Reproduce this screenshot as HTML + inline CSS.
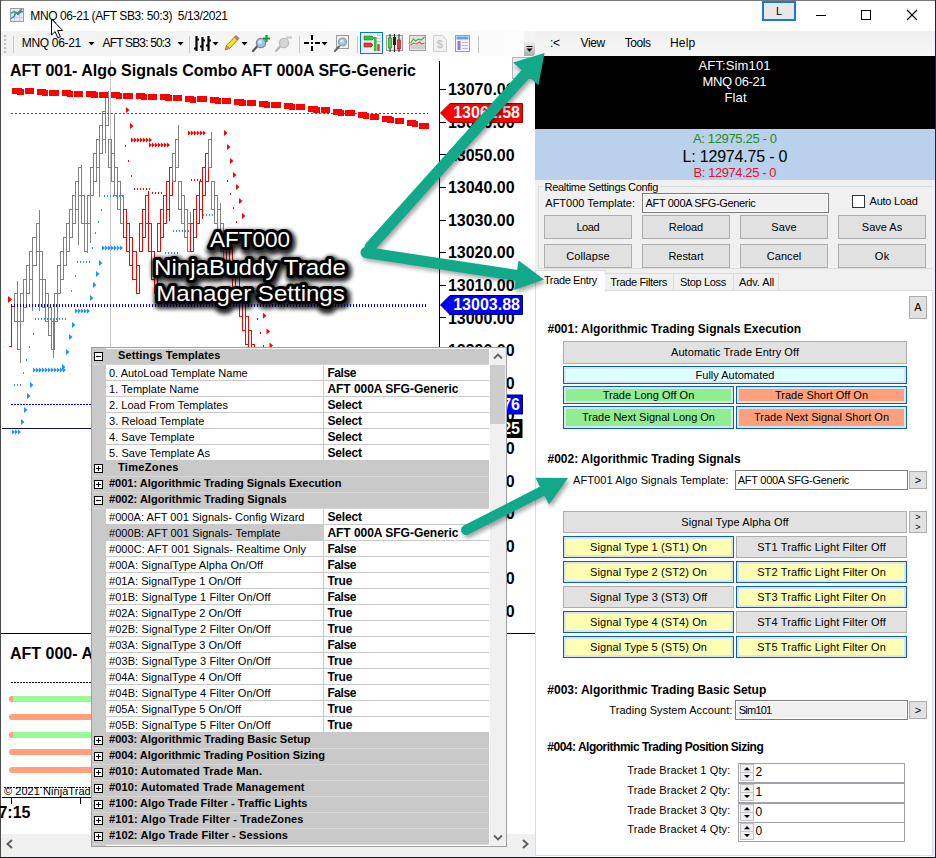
<!DOCTYPE html>
<html><head><meta charset="utf-8"><title>MNQ 06-21</title><style>
html,body{margin:0;padding:0;}
body{width:936px;height:858px;overflow:hidden;background:#fff;position:relative;font-family:"Liberation Sans", sans-serif;}
div,span.t,svg{position:absolute;box-sizing:border-box;}
span.t{white-space:pre;}
.btn{background:#e1e1e1;border:1px solid #adadad;}
</style></head><body>
<svg style="left:10px;top:8px" width="14" height="14" viewBox="0 0 14 14">
<rect x="0.5" y="0.5" width="13" height="13" fill="#e9e9f6" stroke="#9a9abc"/>
<path d="M4.5 1v12M9.5 1v12M1 4.5h12M1 9.5h12" stroke="#c9c9e2" stroke-width="1" fill="none"/>
<path d="M1 10.5l3-2 2-4 2 2 3-3 2 0" stroke="#2a78d8" stroke-width="1.4" fill="none"/>
<path d="M1 5.5l3-2 2 2 2-1 4-3.5" stroke="#2fae2f" stroke-width="1.4" fill="none"/>
</svg>
<span class="t" style="top:7.64px;font-size:12px;line-height:16px;color:#000;letter-spacing:-0.405px;left:30.3px;">MNQ 06-21 (AFT SB3: 50:3)  5/13/2021</span>
<div style="left:762px;top:1px;width:34px;height:20px;background:#e8e8e8;border:2px solid #1879d6;"></div>
<span class="t" style="top:3.63px;font-size:11px;line-height:15px;color:#000;left:779px;transform:translateX(-50%);">L</span>
<svg style="left:800px;top:0px" width="135" height="31" viewBox="0 0 135 31">
<path d="M16 15.5h10" stroke="#000" stroke-width="1" fill="none"/>
<rect x="61.5" y="10.5" width="9" height="9" stroke="#000" stroke-width="1" fill="none"/>
<path d="M107 10l10 10M117 10l-10 10" stroke="#000" stroke-width="1.1" fill="none"/>
</svg>
<div style="left:1px;top:31px;width:523px;height:25px;background:linear-gradient(90deg,#f2f2f2,#f6f6f6 60%,#fcfcfc);"></div>
<div style="left:524px;top:31px;width:11px;height:25px;background:linear-gradient(#f4f4f4 40%,#a8a8a8);border-radius:0 3px 3px 0;"></div>
<svg style="left:524px;top:44px" width="11" height="10" viewBox="0 0 11 10">
<path d="M2.5 2.5h6" stroke="#000" stroke-width="1"/><path d="M2.5 4.5h6l-3 3.2z" fill="#000"/>
<path d="M3.5 3.5h6" stroke="#fff" stroke-width="1" opacity=".0"/></svg>
<div style="left:4px;top:35px;width:2px;height:2px;background:#c0c0c0;"></div>
<div style="left:4px;top:39px;width:2px;height:2px;background:#c0c0c0;"></div>
<div style="left:4px;top:43px;width:2px;height:2px;background:#c0c0c0;"></div>
<div style="left:4px;top:47px;width:2px;height:2px;background:#c0c0c0;"></div>
<div style="left:4px;top:51px;width:2px;height:2px;background:#c0c0c0;"></div>
<div style="left:13px;top:36px;width:1px;height:17px;background:#c8c8c8;"></div>
<span class="t" style="top:35.14px;font-size:12px;line-height:16px;color:#000;letter-spacing:-0.316px;left:21.8px;">MNQ 06-21</span>
<span class="t" style="top:35.14px;font-size:12px;line-height:16px;color:#000;letter-spacing:-0.842px;left:102.6px;">AFT SB3: 50:3</span>
<svg style="left:88px;top:42px" width="7" height="4" viewBox="0 0 7 4"><path d="M0.5 0h6l-3 3.5z" fill="#000"/></svg>
<svg style="left:176.5px;top:42px" width="7" height="4" viewBox="0 0 7 4"><path d="M0.5 0h6l-3 3.5z" fill="#000"/></svg>
<svg style="left:212px;top:42px" width="7" height="4" viewBox="0 0 7 4"><path d="M0.5 0h6l-3 3.5z" fill="#000"/></svg>
<svg style="left:241px;top:42px" width="7" height="4" viewBox="0 0 7 4"><path d="M0.5 0h6l-3 3.5z" fill="#000"/></svg>
<svg style="left:321px;top:42px" width="7" height="4" viewBox="0 0 7 4"><path d="M0.5 0h6l-3 3.5z" fill="#000"/></svg>
<div style="left:189px;top:36px;width:1px;height:17px;background:#c8c8c8;"></div>
<div style="left:299px;top:36px;width:1px;height:17px;background:#c8c8c8;"></div>
<div style="left:357px;top:36px;width:1px;height:17px;background:#c8c8c8;"></div>
<div style="left:478px;top:36px;width:1px;height:17px;background:#c8c8c8;"></div>
<svg style="left:193px;top:35px" width="20" height="18" viewBox="0 0 20 18">
<path d="M3.5 1v15M9.5 2v14M15.5 1v15" stroke="#000" stroke-width="2.2" fill="none"/>
<path d="M1 13.5h3M3 4.5h3M7 11.5h3M9 5.5h3M13 10.5h3M15 5.5h3" stroke="#000" stroke-width="2" fill="none"/></svg>
<svg style="left:223px;top:34px" width="18" height="18" viewBox="0 0 18 18">
<path d="M2 16l1.5-4.5 3 3z" fill="#c8a36a" stroke="#6b5a2a" stroke-width=".6"/>
<path d="M3.5 11.5l8-8.5 3 3-8 8.5z" fill="#f4e21a" stroke="#8a7a10" stroke-width=".8"/>
<path d="M11.5 3l1.6-1.6 3 3-1.6 1.6z" fill="#e8748a" stroke="#8a3a4a" stroke-width=".6"/></svg>
<svg style="left:251px;top:34px" width="20" height="19" viewBox="0 0 20 19">
<path d="M2 17l5-5.5" stroke="#555" stroke-width="2.2" stroke-linecap="round"/>
<circle cx="10" cy="9" r="4.6" fill="#8fc6f2" stroke="#8a8a8a" stroke-width="1.4"/>
<circle cx="9" cy="8" r="2" fill="#d7ecfb"/>
<path d="M15.5 1v7M12 4.5h7" stroke="#0aa520" stroke-width="2.2"/></svg>
<svg style="left:274px;top:34px" width="20" height="19" viewBox="0 0 20 19">
<path d="M2 17l5-5.5" stroke="#b5b5b5" stroke-width="2.2" stroke-linecap="round"/>
<circle cx="10" cy="9" r="4.6" fill="#d6d6d6" stroke="#bdbdbd" stroke-width="1.4"/>
<path d="M12 3.5h6" stroke="#c4c4c4" stroke-width="2"/></svg>
<svg style="left:304px;top:35px" width="16" height="16" viewBox="0 0 16 16">
<path d="M8 0v5M8 11v5M0 8h5M11 8h5" stroke="#000" stroke-width="2"/><rect x="7" y="7" width="2" height="2" fill="#000"/></svg>
<svg style="left:334px;top:35px" width="16" height="17" viewBox="0 0 16 17">
<rect x="2.5" y="0.5" width="12" height="13" fill="#f4f4f4" stroke="#9a9a9a"/>
<path d="M1 16l4-4.5" stroke="#666" stroke-width="2" stroke-linecap="round"/>
<circle cx="8.5" cy="7" r="4" fill="#8fc6f2" stroke="#9a9a9a" stroke-width="1.2"/>
<circle cx="7.8" cy="6.2" r="1.8" fill="#d7ecfb"/></svg>
<svg style="left:360px;top:32px" width="23" height="22" viewBox="0 0 23 22">
<rect x="0.5" y="0.5" width="22" height="21" fill="#e5f1fb" stroke="#0078d7"/>
<path d="M4 4h8l2 2-2 2H4z" fill="#35c035" stroke="#1a7a1a" stroke-width=".6"/>
<path d="M4 11h7l2 2-2 2H4z" fill="#e83a3a" stroke="#8a1a1a" stroke-width=".6"/>
<rect x="14" y="5" width="2.6" height="14" fill="#35c035"/>
<rect x="17.3" y="12" width="2.4" height="7" fill="#e83a3a"/>
<path d="M17 3.5h4M17 6.5h4M17 9.5h4" stroke="#c8c8c8"/></svg>
<svg style="left:386px;top:34px" width="17" height="18" viewBox="0 0 17 18">
<rect x="0.5" y="1.5" width="16" height="15" fill="#e6e6e6" stroke="#a0a0a0"/>
<path d="M4 0v18M8.5 0v18M13 0v18" stroke="#222" stroke-width="1"/>
<rect x="2.5" y="4" width="3" height="10" fill="#4fd84f" stroke="#1a7a1a" stroke-width=".6"/>
<rect x="7" y="3" width="3" height="8" fill="#222"/>
<rect x="11.5" y="6" width="3" height="9" fill="#ea3a3a" stroke="#8a1a1a" stroke-width=".6"/></svg>
<svg style="left:409px;top:35px" width="17" height="16" viewBox="0 0 17 16">
<rect x="0.5" y="0.5" width="16" height="15" fill="#e4e4e4" stroke="#a0a0a0"/>
<path d="M1 11h15M1 13h15" stroke="#bdbdbd"/>
<path d="M1.5 8l3-4 2 2 3-2 3 1 3-3" stroke="#3ab03a" stroke-width="1.1" fill="none"/>
<path d="M1.5 10l3-2 3 1 3-2 2 2 3-1" stroke="#e05050" stroke-width="1.1" fill="none"/></svg>
<svg style="left:433px;top:35px" width="14" height="17" viewBox="0 0 14 17">
<path d="M0.5 0.5h9l4 4v12h-13z" fill="#f1f1f1" stroke="#d0d0d0"/>
<text x="6.8" y="13" font-family="Liberation Sans, sans-serif" font-size="11" font-weight="bold" fill="#c6c6c6" text-anchor="middle">$</text></svg>
<svg style="left:455px;top:35px" width="15" height="17" viewBox="0 0 15 17">
<rect x="0.5" y="0.5" width="14" height="16" fill="#f4f4ff" stroke="#9a9ac0"/>
<rect x="1.5" y="1.5" width="12" height="3" fill="#6aa0e8"/>
<rect x="2.5" y="6" width="3" height="9" fill="#a070e0"/>
<path d="M7 7.5h6M7 10.5h6M7 13.5h6" stroke="#b8b8d8"/></svg>
<div style="left:535px;top:31px;width:400px;height:25px;background:linear-gradient(#f0f0f0,#f6f6f6);"></div>
<span class="t" style="top:35.14px;font-size:12px;line-height:16px;color:#000;letter-spacing:-0.344px;left:549.9px;">:&lt;</span>
<span class="t" style="top:35.14px;font-size:12px;line-height:16px;color:#000;letter-spacing:-0.366px;left:580.5px;">View</span>
<span class="t" style="top:35.14px;font-size:12px;line-height:16px;color:#000;letter-spacing:-0.429px;left:624.7px;">Tools</span>
<span class="t" style="top:35.14px;font-size:12px;line-height:16px;color:#000;letter-spacing:0.237px;left:669.9px;">Help</span>
<div style="left:0px;top:0px;width:936px;height:1px;background:#777;"></div>
<div style="left:0px;top:0px;width:1px;height:858px;background:#4b4b4b;"></div>
<div style="left:935px;top:0px;width:1px;height:858px;background:#1d1d4e;"></div>
<div style="left:0px;top:857px;width:936px;height:1px;background:#14142e;"></div>
<svg style="left:0;top:56px" width="536" height="802" viewBox="0 56 536 802" shape-rendering="crispEdges">
<path d="M110.5 61V634" stroke="#c4c4c4" stroke-width="1"/>
<path d="M14 306.5H11.5V346.5H9" stroke="#ff0000" stroke-width="1.2" fill="none"/>
<path d="M53.5 320V358" stroke="#808080"/>
<path d="M14.5 293.5H17.5V321.5H14.5z" fill="none" stroke="#808080" stroke-width="1"/>
<path d="M17.5 293v-12" stroke="#808080"/>
<path d="M17.5 321.5H20.5V349.5H17.5z" fill="none" stroke="#808080" stroke-width="1"/>
<path d="M20.5 349v14" stroke="#808080"/>
<path d="M20.5 293.5H23.5V321.5H20.5z" fill="none" stroke="#808080" stroke-width="1"/>
<path d="M23.5 279.5H26.5V307.5H23.5z" fill="none" stroke="#808080" stroke-width="1"/>
<path d="M26.5 265.5H29.5V293.5H26.5z" fill="none" stroke="#808080" stroke-width="1"/>
<path d="M29.5 251.5H32.5V279.5H29.5z" fill="none" stroke="#808080" stroke-width="1"/>
<path d="M32.5 279v32" stroke="#808080"/>
<path d="M32.5 237.5H36.5V265.5H32.5z" fill="none" stroke="#808080" stroke-width="1"/>
<path d="M36.5 223.5H39.5V251.5H36.5z" fill="none" stroke="#808080" stroke-width="1"/>
<path d="M39.5 223v-13" stroke="#808080"/>
<path d="M39.5 251v60" stroke="#808080"/>
<path d="M39.5 251.5H42.5V279.5H39.5z" fill="none" stroke="#808080" stroke-width="1"/>
<path d="M42.5 279.5H45.5V307.5H42.5z" fill="none" stroke="#808080" stroke-width="1"/>
<path d="M45.5 293.5H48.5V321.5H45.5z" fill="none" stroke="#808080" stroke-width="1"/>
<path d="M48.5 321v8" stroke="#808080"/>
<path d="M48.5 307.5H51.5V335.5H48.5z" fill="none" stroke="#808080" stroke-width="1"/>
<path d="M51.5 321.5H54.5V349.5H51.5z" fill="none" stroke="#808080" stroke-width="1"/>
<path d="M54.5 293.5H57.5V321.5H54.5z" fill="none" stroke="#808080" stroke-width="1"/>
<path d="M57.5 265.5H60.5V293.5H57.5z" fill="none" stroke="#808080" stroke-width="1"/>
<path d="M60.5 251.5H63.5V279.5H60.5z" fill="none" stroke="#808080" stroke-width="1"/>
<path d="M63.5 237.5H66.5V265.5H63.5z" fill="none" stroke="#808080" stroke-width="1"/>
<path d="M66.5 223.5H69.5V251.5H66.5z" fill="none" stroke="#808080" stroke-width="1"/>
<path d="M69.5 209.5H72.5V237.5H69.5z" fill="none" stroke="#808080" stroke-width="1"/>
<path d="M72.5 195.5H75.5V223.5H72.5z" fill="none" stroke="#808080" stroke-width="1"/>
<path d="M75.5 181.5H78.5V209.5H75.5z" fill="none" stroke="#808080" stroke-width="1"/>
<path d="M78.5 209v36" stroke="#808080"/>
<path d="M78.5 167.5H81.5V195.5H78.5z" fill="none" stroke="#808080" stroke-width="1"/>
<path d="M81.5 167v-2" stroke="#808080"/>
<path d="M81.5 195.5H84.5V223.5H81.5z" fill="none" stroke="#808080" stroke-width="1"/>
<path d="M84.5 223.5H87.5V251.5H84.5z" fill="none" stroke="#808080" stroke-width="1"/>
<path d="M87.5 251v2" stroke="#808080"/>
<path d="M87.5 195.5H90.5V223.5H87.5z" fill="none" stroke="#808080" stroke-width="1"/>
<path d="M90.5 223v20" stroke="#808080"/>
<path d="M90.5 167.5H93.5V195.5H90.5z" fill="none" stroke="#808080" stroke-width="1"/>
<path d="M93.5 153.5H96.5V181.5H93.5z" fill="none" stroke="#808080" stroke-width="1"/>
<path d="M96.5 139.5H99.5V167.5H96.5z" fill="none" stroke="#808080" stroke-width="1"/>
<path d="M99.5 167v30" stroke="#808080"/>
<path d="M99.5 125.5H102.5V153.5H99.5z" fill="none" stroke="#808080" stroke-width="1"/>
<path d="M102.5 111.5H105.5V139.5H102.5z" fill="none" stroke="#808080" stroke-width="1"/>
<path d="M105.5 139v14" stroke="#808080"/>
<path d="M105.5 97.5H108.5V125.5H105.5z" fill="none" stroke="#808080" stroke-width="1"/>
<path d="M108.5 97v-6" stroke="#808080"/>
<path d="M108.5 139.5H111.5V167.5H108.5z" fill="none" stroke="#808080" stroke-width="1"/>
<path d="M111.5 153.5H114.5V181.5H111.5z" fill="none" stroke="#808080" stroke-width="1"/>
<path d="M114.5 153v-39" stroke="#808080"/>
<path d="M114.5 167.5H117.5V195.5H114.5z" fill="none" stroke="#808080" stroke-width="1"/>
<path d="M117.5 181.5H120.5V209.5H117.5z" fill="none" stroke="#808080" stroke-width="1"/>
<path d="M120.5 195.5H123.5V223.5H120.5z" fill="none" stroke="#808080" stroke-width="1"/>
<path d="M123.5 209.5H126.5V237.5H123.5z" fill="none" stroke="#ff0000" stroke-width="1"/>
<path d="M126.5 223.5H129.5V251.5H126.5z" fill="none" stroke="#ff0000" stroke-width="1"/>
<path d="M129.5 237.5H132.5V265.5H129.5z" fill="none" stroke="#ff0000" stroke-width="1"/>
<path d="M132.5 251.5H136.5V279.5H132.5z" fill="none" stroke="#ff0000" stroke-width="1"/>
<path d="M136.5 265.5H139.5V293.5H136.5z" fill="none" stroke="#ff0000" stroke-width="1"/>
<path d="M139.5 223.5H142.5V251.5H139.5z" fill="none" stroke="#ff0000" stroke-width="1"/>
<path d="M142.5 209.5H145.5V237.5H142.5z" fill="none" stroke="#ff0000" stroke-width="1"/>
<path d="M145.5 195.5H148.5V223.5H145.5z" fill="none" stroke="#ff0000" stroke-width="1"/>
<path d="M148.5 195v-4" stroke="#ff0000"/>
<path d="M148.5 223.5H151.5V251.5H148.5z" fill="none" stroke="#ff0000" stroke-width="1"/>
<path d="M151.5 251.5H154.5V279.5H151.5z" fill="none" stroke="#ff0000" stroke-width="1"/>
<path d="M154.5 265.5H157.5V293.5H154.5z" fill="none" stroke="#ff0000" stroke-width="1"/>
<path d="M157.5 223.5H160.5V251.5H157.5z" fill="none" stroke="#ff0000" stroke-width="1"/>
<path d="M160.5 209.5H163.5V237.5H160.5z" fill="none" stroke="#ff0000" stroke-width="1"/>
<path d="M163.5 195.5H166.5V223.5H163.5z" fill="none" stroke="#ff0000" stroke-width="1"/>
<path d="M166.5 181.5H169.5V209.5H166.5z" fill="none" stroke="#ff0000" stroke-width="1"/>
<path d="M169.5 209v12" stroke="#ff0000"/>
<path d="M169.5 167.5H172.5V195.5H169.5z" fill="none" stroke="#ff0000" stroke-width="1"/>
<path d="M172.5 153.5H175.5V181.5H172.5z" fill="none" stroke="#808080" stroke-width="1"/>
<path d="M175.5 139.5H178.5V167.5H175.5z" fill="none" stroke="#808080" stroke-width="1"/>
<path d="M178.5 139v-14" stroke="#808080"/>
<path d="M178.5 181.5H181.5V209.5H178.5z" fill="none" stroke="#808080" stroke-width="1"/>
<path d="M181.5 195.5H184.5V223.5H181.5z" fill="none" stroke="#808080" stroke-width="1"/>
<path d="M184.5 209.5H187.5V237.5H184.5z" fill="none" stroke="#808080" stroke-width="1"/>
<path d="M187.5 223.5H190.5V251.5H187.5z" fill="none" stroke="#808080" stroke-width="1"/>
<path d="M190.5 223v-11" stroke="#808080"/>
<path d="M190.5 223.5H193.5V251.5H190.5z" fill="none" stroke="#ff0000" stroke-width="1"/>
<path d="M193.5 209.5H196.5V237.5H193.5z" fill="none" stroke="#ff0000" stroke-width="1"/>
<path d="M196.5 195.5H199.5V223.5H196.5z" fill="none" stroke="#ff0000" stroke-width="1"/>
<path d="M199.5 181.5H202.5V209.5H199.5z" fill="none" stroke="#ff0000" stroke-width="1"/>
<path d="M202.5 209v10" stroke="#ff0000"/>
<path d="M202.5 167.5H205.5V195.5H202.5z" fill="none" stroke="#ff0000" stroke-width="1"/>
<path d="M205.5 153.5H208.5V181.5H205.5z" fill="none" stroke="#ff0000" stroke-width="1"/>
<path d="M208.5 139.5H211.5V167.5H208.5z" fill="none" stroke="#808080" stroke-width="1"/>
<path d="M211.5 139v-7" stroke="#808080"/>
<path d="M211.5 181.5H214.5V209.5H211.5z" fill="none" stroke="#808080" stroke-width="1"/>
<path d="M214.5 195.5H217.5V223.5H214.5z" fill="none" stroke="#808080" stroke-width="1"/>
<path d="M217.5 209.5H220.5V237.5H217.5z" fill="none" stroke="#808080" stroke-width="1"/>
<path d="M220.5 209v-6" stroke="#808080"/>
<path d="M220.5 223.5H223.5V251.5H220.5z" fill="none" stroke="#808080" stroke-width="1"/>
<path d="M223.5 237.5H226.5V265.5H223.5z" fill="none" stroke="#808080" stroke-width="1"/>
<path d="M226.5 232.5H229.5V260.5H226.5z" fill="none" stroke="#ff0000" stroke-width="1"/>
<path d="M229.5 246.5H232.5V274.5H229.5z" fill="none" stroke="#ff0000" stroke-width="1"/>
<path d="M232.5 260.5H235.5V288.5H232.5z" fill="none" stroke="#ff0000" stroke-width="1"/>
<path d="M235.5 274.5H239.5V302.5H235.5z" fill="none" stroke="#ff0000" stroke-width="1"/>
<path d="M239.5 288.5H242.5V316.5H239.5z" fill="none" stroke="#ff0000" stroke-width="1"/>
<path d="M242.5 302.5H245.5V330.5H242.5z" fill="none" stroke="#ff0000" stroke-width="1"/>
<path d="M245.5 316.5H248.5V344.5H245.5z" fill="none" stroke="#ff0000" stroke-width="1"/>
<path d="M248.5 330.5H251.5V358.5H248.5z" fill="none" stroke="#ff0000" stroke-width="1"/>
<path d="M251.5 344.5H254.5V372.5H251.5z" fill="none" stroke="#ff0000" stroke-width="1"/>
<rect x="12" y="88" width="10" height="6" fill="#ff0000"/>
<rect x="17" y="89" width="7" height="6" fill="#ff0000"/>
<rect x="25" y="88" width="9" height="6" fill="#ff0000"/>
<rect x="37" y="89" width="9" height="6" fill="#ff0000"/>
<rect x="42" y="90" width="6" height="6" fill="#ff0000"/>
<rect x="49" y="90" width="10" height="6" fill="#ff0000"/>
<rect x="62" y="90" width="9" height="6" fill="#ff0000"/>
<rect x="67" y="91" width="6" height="6" fill="#ff0000"/>
<rect x="74" y="91" width="9" height="6" fill="#ff0000"/>
<rect x="86" y="91" width="10" height="6" fill="#ff0000"/>
<rect x="91" y="92" width="7" height="6" fill="#ff0000"/>
<rect x="99" y="92" width="9" height="6" fill="#ff0000"/>
<rect x="111" y="92" width="9" height="6" fill="#ff0000"/>
<rect x="116" y="93" width="6" height="6" fill="#ff0000"/>
<rect x="123" y="93" width="10" height="6" fill="#ff0000"/>
<rect x="136" y="93" width="9" height="6" fill="#ff0000"/>
<rect x="141" y="94" width="6" height="6" fill="#ff0000"/>
<rect x="148" y="94" width="9" height="6" fill="#ff0000"/>
<rect x="160" y="94" width="10" height="6" fill="#ff0000"/>
<rect x="165" y="95" width="7" height="6" fill="#ff0000"/>
<rect x="173" y="95" width="9" height="6" fill="#ff0000"/>
<rect x="185" y="96" width="9" height="6" fill="#ff0000"/>
<rect x="190" y="97" width="6" height="6" fill="#ff0000"/>
<rect x="197" y="96" width="10" height="6" fill="#ff0000"/>
<rect x="210" y="97" width="9" height="6" fill="#ff0000"/>
<rect x="215" y="98" width="6" height="6" fill="#ff0000"/>
<rect x="222" y="98" width="9" height="6" fill="#ff0000"/>
<rect x="234" y="99" width="10" height="6" fill="#ff0000"/>
<rect x="239" y="100" width="7" height="6" fill="#ff0000"/>
<rect x="247" y="100" width="9" height="6" fill="#ff0000"/>
<rect x="259" y="101" width="9" height="6" fill="#ff0000"/>
<rect x="264" y="102" width="6" height="6" fill="#ff0000"/>
<rect x="271" y="102" width="10" height="6" fill="#ff0000"/>
<rect x="284" y="103" width="9" height="6" fill="#ff0000"/>
<rect x="289" y="104" width="6" height="6" fill="#ff0000"/>
<rect x="296" y="104" width="9" height="6" fill="#ff0000"/>
<rect x="308" y="106" width="10" height="6" fill="#ff0000"/>
<rect x="313" y="107" width="7" height="6" fill="#ff0000"/>
<rect x="321" y="107" width="9" height="6" fill="#ff0000"/>
<rect x="333" y="109" width="9" height="6" fill="#ff0000"/>
<rect x="338" y="110" width="6" height="6" fill="#ff0000"/>
<rect x="345" y="110" width="10" height="6" fill="#ff0000"/>
<rect x="358" y="112" width="9" height="6" fill="#ff0000"/>
<rect x="363" y="113" width="6" height="6" fill="#ff0000"/>
<rect x="370" y="114" width="9" height="6" fill="#ff0000"/>
<rect x="382" y="116" width="10" height="6" fill="#ff0000"/>
<rect x="387" y="117" width="7" height="6" fill="#ff0000"/>
<rect x="395" y="118" width="9" height="6" fill="#ff0000"/>
<rect x="407" y="120" width="9" height="6" fill="#ff0000"/>
<rect x="412" y="121" width="6" height="6" fill="#ff0000"/>
<rect x="419" y="123" width="10" height="6" fill="#ff0000"/>
<path d="M11 113.5H428" stroke="#ff0000" stroke-width="1" stroke-dasharray="2 2"/>
<path d="M11 305.5H428" stroke="#0000ff" stroke-width="3" stroke-dasharray="1 2"/>
<path d="M11 404.5H440" stroke="#0000ff" stroke-width="1" stroke-dasharray="2 1"/>
<path d="M2 428.5H440" stroke="#10104a" stroke-width="1"/>
<path d="M126 107L129.5 110L126 113z" fill="#ff0000" shape-rendering="auto"/>
<path d="M130 123L133.5 126L130 129z" fill="#ff0000" shape-rendering="auto"/>
<path d="M131 137.5L134.0 140L131 142.5z" fill="#ff0000" shape-rendering="auto"/>
<path d="M134 137.5L137.0 140L134 142.5z" fill="#ff0000" shape-rendering="auto"/>
<path d="M137 137.5L140.0 140L137 142.5z" fill="#ff0000" shape-rendering="auto"/>
<path d="M140 137.5L143.0 140L140 142.5z" fill="#ff0000" shape-rendering="auto"/>
<path d="M143 137.5L146.0 140L143 142.5z" fill="#ff0000" shape-rendering="auto"/>
<path d="M146 137.5L149.0 140L146 142.5z" fill="#ff0000" shape-rendering="auto"/>
<path d="M149 137.5L152.0 140L149 142.5z" fill="#ff0000" shape-rendering="auto"/>
<path d="M149 142.5L152.0 145L149 147.5z" fill="#ff0000" shape-rendering="auto"/>
<path d="M152 142.5L155.0 145L152 147.5z" fill="#ff0000" shape-rendering="auto"/>
<path d="M155 142.5L158.0 145L155 147.5z" fill="#ff0000" shape-rendering="auto"/>
<path d="M158 142.5L161.0 145L158 147.5z" fill="#ff0000" shape-rendering="auto"/>
<path d="M161 142.5L164.0 145L161 147.5z" fill="#ff0000" shape-rendering="auto"/>
<path d="M164 142.5L167.0 145L164 147.5z" fill="#ff0000" shape-rendering="auto"/>
<path d="M167 142.5L170.0 145L167 147.5z" fill="#ff0000" shape-rendering="auto"/>
<rect x="125" y="145" width="1" height="2" fill="#ff0000"/>
<rect x="128" y="160" width="1" height="2" fill="#ff0000"/>
<rect x="131" y="175" width="1" height="2" fill="#ff0000"/>
<rect x="134" y="188" width="1" height="2" fill="#ff0000"/>
<rect x="137" y="188" width="1" height="2" fill="#ff0000"/>
<rect x="140" y="188" width="1" height="2" fill="#ff0000"/>
<rect x="143" y="188" width="1" height="2" fill="#ff0000"/>
<rect x="146" y="188" width="1" height="2" fill="#ff0000"/>
<rect x="149" y="188" width="1" height="2" fill="#ff0000"/>
<rect x="152" y="192" width="1" height="2" fill="#ff0000"/>
<rect x="155" y="192" width="1" height="2" fill="#ff0000"/>
<rect x="158" y="192" width="1" height="2" fill="#ff0000"/>
<rect x="161" y="192" width="1" height="2" fill="#ff0000"/>
<rect x="191" y="179" width="1" height="2" fill="#ff0000"/>
<rect x="194" y="179" width="1" height="2" fill="#ff0000"/>
<rect x="197" y="179" width="1" height="2" fill="#ff0000"/>
<rect x="200" y="179" width="1" height="2" fill="#ff0000"/>
<path d="M188 130.5L191.0 133L188 135.5z" fill="#ff0000" shape-rendering="auto"/>
<path d="M191 130.5L194.0 133L191 135.5z" fill="#ff0000" shape-rendering="auto"/>
<path d="M194 130.5L197.0 133L194 135.5z" fill="#ff0000" shape-rendering="auto"/>
<path d="M197 130.5L200.0 133L197 135.5z" fill="#ff0000" shape-rendering="auto"/>
<path d="M200 130.5L203.0 133L200 135.5z" fill="#ff0000" shape-rendering="auto"/>
<path d="M203 130.5L206.0 133L203 135.5z" fill="#ff0000" shape-rendering="auto"/>
<path d="M224 130L227.5 133L224 136z" fill="#ff0000" shape-rendering="auto"/>
<path d="M227 144L230.5 147L227 150z" fill="#ff0000" shape-rendering="auto"/>
<path d="M230 158L233.5 161L230 164z" fill="#ff0000" shape-rendering="auto"/>
<path d="M233 172L236.5 175L233 178z" fill="#ff0000" shape-rendering="auto"/>
<path d="M236 184L239.5 187L236 190z" fill="#ff0000" shape-rendering="auto"/>
<path d="M239 198L242.5 201L239 204z" fill="#ff0000" shape-rendering="auto"/>
<path d="M242 213L245.5 216L242 219z" fill="#ff0000" shape-rendering="auto"/>
<rect x="227" y="180" width="1" height="2" fill="#ff0000"/>
<rect x="230" y="193" width="1" height="2" fill="#ff0000"/>
<rect x="233" y="207" width="1" height="2" fill="#ff0000"/>
<rect x="236" y="221" width="1" height="2" fill="#ff0000"/>
<path d="M8 296.0L12.0 299.5L8 303.0z" fill="#ff0000" shape-rendering="auto"/>
<path d="M263 312.7L266.5 315.7L263 318.7z" fill="#ff0000" shape-rendering="auto"/>
<path d="M266.5 328.4L270.0 331.4L266.5 334.4z" fill="#ff0000" shape-rendering="auto"/>
<path d="M269.5 342.5L273.0 345.5L269.5 348.5z" fill="#ff0000" shape-rendering="auto"/>
<rect x="257" y="318" width="1" height="2" fill="#ff0000"/>
<rect x="260" y="332" width="1" height="2" fill="#ff0000"/>
<rect x="263" y="345" width="1" height="2" fill="#ff0000"/>
<rect x="104" y="195" width="1" height="2" fill="#1e90ff"/>
<rect x="107" y="195" width="1" height="2" fill="#1e90ff"/>
<rect x="110" y="195" width="1" height="2" fill="#1e90ff"/>
<rect x="113" y="195" width="1" height="2" fill="#1e90ff"/>
<rect x="116" y="195" width="1" height="2" fill="#1e90ff"/>
<rect x="119" y="195" width="1" height="2" fill="#1e90ff"/>
<rect x="122" y="195" width="1" height="2" fill="#1e90ff"/>
<rect x="77" y="261" width="1" height="2" fill="#1e90ff"/>
<rect x="80" y="261" width="1" height="2" fill="#1e90ff"/>
<rect x="83" y="261" width="1" height="2" fill="#1e90ff"/>
<rect x="86" y="261" width="1" height="2" fill="#1e90ff"/>
<rect x="89" y="261" width="1" height="2" fill="#1e90ff"/>
<rect x="35" y="318" width="1" height="2" fill="#1e90ff"/>
<rect x="38" y="318" width="1" height="2" fill="#1e90ff"/>
<rect x="41" y="318" width="1" height="2" fill="#1e90ff"/>
<rect x="44" y="318" width="1" height="2" fill="#1e90ff"/>
<rect x="47" y="318" width="1" height="2" fill="#1e90ff"/>
<rect x="50" y="318" width="1" height="2" fill="#1e90ff"/>
<rect x="53" y="318" width="1" height="2" fill="#1e90ff"/>
<rect x="56" y="318" width="1" height="2" fill="#1e90ff"/>
<rect x="59" y="318" width="1" height="2" fill="#1e90ff"/>
<rect x="62" y="318" width="1" height="2" fill="#1e90ff"/>
<rect x="65" y="318" width="1" height="2" fill="#1e90ff"/>
<rect x="173" y="230" width="1" height="2" fill="#1e90ff"/>
<rect x="176" y="230" width="1" height="2" fill="#1e90ff"/>
<rect x="179" y="230" width="1" height="2" fill="#1e90ff"/>
<rect x="182" y="230" width="1" height="2" fill="#1e90ff"/>
<rect x="185" y="230" width="1" height="2" fill="#1e90ff"/>
<rect x="188" y="230" width="1" height="2" fill="#1e90ff"/>
<rect x="165" y="252" width="1" height="2" fill="#1e90ff"/>
<rect x="168" y="252" width="1" height="2" fill="#1e90ff"/>
<rect x="171" y="252" width="1" height="2" fill="#1e90ff"/>
<rect x="174" y="252" width="1" height="2" fill="#1e90ff"/>
<rect x="177" y="252" width="1" height="2" fill="#1e90ff"/>
<rect x="101" y="209" width="1" height="2" fill="#1e90ff"/>
<rect x="98" y="221" width="1" height="2" fill="#1e90ff"/>
<rect x="95" y="232" width="1" height="2" fill="#1e90ff"/>
<rect x="92" y="247" width="1" height="2" fill="#1e90ff"/>
<rect x="75" y="275" width="1" height="2" fill="#1e90ff"/>
<rect x="71" y="290" width="1" height="2" fill="#1e90ff"/>
<rect x="33" y="333" width="1" height="2" fill="#1e90ff"/>
<rect x="29" y="346" width="1" height="2" fill="#1e90ff"/>
<rect x="26" y="359" width="1" height="2" fill="#1e90ff"/>
<rect x="23" y="372" width="1" height="2" fill="#1e90ff"/>
<path d="M102 245.5L105.0 248L102 250.5z" fill="#1e90ff" shape-rendering="auto"/>
<path d="M105 245.5L108.0 248L105 250.5z" fill="#1e90ff" shape-rendering="auto"/>
<path d="M108 245.5L111.0 248L108 250.5z" fill="#1e90ff" shape-rendering="auto"/>
<path d="M111 245.5L114.0 248L111 250.5z" fill="#1e90ff" shape-rendering="auto"/>
<path d="M114 245.5L117.0 248L114 250.5z" fill="#1e90ff" shape-rendering="auto"/>
<path d="M117 245.5L120.0 248L117 250.5z" fill="#1e90ff" shape-rendering="auto"/>
<path d="M120 245.5L123.0 248L120 250.5z" fill="#1e90ff" shape-rendering="auto"/>
<path d="M99 260L102.5 263L99 266z" fill="#1e90ff" shape-rendering="auto"/>
<path d="M96 271L99.5 274L96 277z" fill="#1e90ff" shape-rendering="auto"/>
<path d="M93 282L96.5 285L93 288z" fill="#1e90ff" shape-rendering="auto"/>
<path d="M90 295L93.5 298L90 301z" fill="#1e90ff" shape-rendering="auto"/>
<path d="M75 308.5L78.0 311L75 313.5z" fill="#1e90ff" shape-rendering="auto"/>
<path d="M78 308.5L81.0 311L78 313.5z" fill="#1e90ff" shape-rendering="auto"/>
<path d="M81 308.5L84.0 311L81 313.5z" fill="#1e90ff" shape-rendering="auto"/>
<path d="M84 308.5L87.0 311L84 313.5z" fill="#1e90ff" shape-rendering="auto"/>
<path d="M87 308.5L90.0 311L87 313.5z" fill="#1e90ff" shape-rendering="auto"/>
<path d="M72 322L75.5 325L72 328z" fill="#1e90ff" shape-rendering="auto"/>
<path d="M69 334L72.5 337L69 340z" fill="#1e90ff" shape-rendering="auto"/>
<path d="M66 349L69.5 352L66 355z" fill="#1e90ff" shape-rendering="auto"/>
<path d="M33 367.5L36.0 370L33 372.5z" fill="#1e90ff" shape-rendering="auto"/>
<path d="M36 367.5L39.0 370L36 372.5z" fill="#1e90ff" shape-rendering="auto"/>
<path d="M39 367.5L42.0 370L39 372.5z" fill="#1e90ff" shape-rendering="auto"/>
<path d="M42 367.5L45.0 370L42 372.5z" fill="#1e90ff" shape-rendering="auto"/>
<path d="M45 367.5L48.0 370L45 372.5z" fill="#1e90ff" shape-rendering="auto"/>
<path d="M48 367.5L51.0 370L48 372.5z" fill="#1e90ff" shape-rendering="auto"/>
<path d="M51 367.5L54.0 370L51 372.5z" fill="#1e90ff" shape-rendering="auto"/>
<path d="M54 367.5L57.0 370L54 372.5z" fill="#1e90ff" shape-rendering="auto"/>
<path d="M57 367.5L60.0 370L57 372.5z" fill="#1e90ff" shape-rendering="auto"/>
<path d="M60 367.5L63.0 370L60 372.5z" fill="#1e90ff" shape-rendering="auto"/>
<path d="M63 367.5L66.0 370L63 372.5z" fill="#1e90ff" shape-rendering="auto"/>
<path d="M62 364L65.5 367L62 370z" fill="#1e90ff" shape-rendering="auto"/>
<path d="M30 382L33.5 385L30 388z" fill="#1e90ff" shape-rendering="auto"/>
<path d="M27 393L30.5 396L27 399z" fill="#1e90ff" shape-rendering="auto"/>
<path d="M24 407L27.5 410L24 413z" fill="#1e90ff" shape-rendering="auto"/>
<path d="M21 419L24.5 422L21 425z" fill="#1e90ff" shape-rendering="auto"/>
<path d="M12 429.5L15.0 432L12 434.5z" fill="#1e90ff" shape-rendering="auto"/>
<path d="M15 429.5L18.0 432L15 434.5z" fill="#1e90ff" shape-rendering="auto"/>
<path d="M18 429.5L21.0 432L18 434.5z" fill="#1e90ff" shape-rendering="auto"/>
<rect x="14" y="384" width="1" height="2" fill="#1e90ff"/>
<rect x="17" y="384" width="1" height="2" fill="#1e90ff"/>
<rect x="20" y="384" width="1" height="2" fill="#1e90ff"/>
<rect x="203" y="214" width="1" height="2" fill="#1e90ff"/>
<rect x="206" y="214" width="1" height="2" fill="#1e90ff"/>
<rect x="209" y="214" width="1" height="2" fill="#1e90ff"/>
<rect x="212" y="214" width="1" height="2" fill="#1e90ff"/>
<path d="M439.5 61V798" stroke="#000" stroke-width="1.6"/>
<path d="M2 797.5H440" stroke="#000" stroke-width="1.6"/>
<path d="M1 633.5H536" stroke="#000" stroke-width="1"/>
<path d="M11.5 798v6M80.5 798v6M150.5 798v6M220.5 798v6" stroke="#000" stroke-width="1.4"/>
<path d="M439 89.5h7" stroke="#000" stroke-width="1.4"/>
<path d="M439 122.5h7" stroke="#000" stroke-width="1.4"/>
<path d="M439 154.5h7" stroke="#000" stroke-width="1.4"/>
<path d="M439 187.5h7" stroke="#000" stroke-width="1.4"/>
<path d="M439 220.5h7" stroke="#000" stroke-width="1.4"/>
<path d="M439 252.5h7" stroke="#000" stroke-width="1.4"/>
<path d="M439 285.5h7" stroke="#000" stroke-width="1.4"/>
<path d="M439 317.5h7" stroke="#000" stroke-width="1.4"/>
<path d="M439 350.5h7" stroke="#000" stroke-width="1.4"/>
<path d="M439 383.5h7" stroke="#000" stroke-width="1.4"/>
<path d="M439 415.5h7" stroke="#000" stroke-width="1.4"/>
<path d="M439 448.5h7" stroke="#000" stroke-width="1.4"/>
<path d="M439 480.5h7" stroke="#000" stroke-width="1.4"/>
<path d="M439 513.5h7" stroke="#000" stroke-width="1.4"/>
<path d="M439 546.5h7" stroke="#000" stroke-width="1.4"/>
<path d="M439 578.5h7" stroke="#000" stroke-width="1.4"/>
<path d="M439 611.5h7" stroke="#000" stroke-width="1.4"/>
<path d="M11 682.5H440" stroke="#000" stroke-width="1" stroke-dasharray="2 1"/>
<path d="M4 787.5H440" stroke="#000" stroke-width="1" stroke-dasharray="2 1"/>
<path d="M12 699H430" stroke="#98fb98" stroke-width="6" stroke-linecap="round" shape-rendering="auto"/>
<path d="M9 699a3 3 0 0 1 3 -3h1v6h-1a3 3 0 0 1 -3 -3z" fill="#ffa07a" shape-rendering="auto"/>
<path d="M12 717H430" stroke="#ffa07a" stroke-width="6" stroke-linecap="round" shape-rendering="auto"/>
<path d="M12 735H430" stroke="#98fb98" stroke-width="6" stroke-linecap="round" shape-rendering="auto"/>
<path d="M9 735a3 3 0 0 1 3 -3h1v6h-1a3 3 0 0 1 -3 -3z" fill="#ffa07a" shape-rendering="auto"/>
<path d="M12 752H430" stroke="#ffa07a" stroke-width="6" stroke-linecap="round" shape-rendering="auto"/>
<path d="M12 770H430" stroke="#ffa07a" stroke-width="6" stroke-linecap="round" shape-rendering="auto"/>
<rect x="512.5" y="57.5" width="23" height="21" fill="#ebebeb" stroke="#b4b4b4"/>
</svg>
<span class="t" style="top:80.38px;font-size:16px;line-height:20px;color:#000;font-weight:bold;left:447.9px;">13070.00</span>
<span class="t" style="top:112.98px;font-size:16px;line-height:20px;color:#000;font-weight:bold;left:447.9px;">13060.00</span>
<span class="t" style="top:145.58px;font-size:16px;line-height:20px;color:#000;font-weight:bold;left:447.9px;">13050.00</span>
<span class="t" style="top:178.18px;font-size:16px;line-height:20px;color:#000;font-weight:bold;left:447.9px;">13040.00</span>
<span class="t" style="top:210.78px;font-size:16px;line-height:20px;color:#000;font-weight:bold;left:447.9px;">13030.00</span>
<span class="t" style="top:243.38px;font-size:16px;line-height:20px;color:#000;font-weight:bold;left:447.9px;">13020.00</span>
<span class="t" style="top:275.98px;font-size:16px;line-height:20px;color:#000;font-weight:bold;left:447.9px;">13010.00</span>
<span class="t" style="top:308.58px;font-size:16px;line-height:20px;color:#000;font-weight:bold;left:447.9px;">13000.00</span>
<span class="t" style="top:341.18px;font-size:16px;line-height:20px;color:#000;font-weight:bold;left:447.9px;">12990.00</span>
<span class="t" style="top:373.78px;font-size:16px;line-height:20px;color:#000;font-weight:bold;left:447.9px;">12980.00</span>
<span class="t" style="top:406.38px;font-size:16px;line-height:20px;color:#000;font-weight:bold;left:447.9px;">12970.00</span>
<span class="t" style="top:438.98px;font-size:16px;line-height:20px;color:#000;font-weight:bold;left:447.9px;">12960.00</span>
<span class="t" style="top:471.58px;font-size:16px;line-height:20px;color:#000;font-weight:bold;left:447.9px;">12950.00</span>
<span class="t" style="top:504.18px;font-size:16px;line-height:20px;color:#000;font-weight:bold;left:447.9px;">12940.00</span>
<span class="t" style="top:536.78px;font-size:16px;line-height:20px;color:#000;font-weight:bold;left:447.9px;">12930.00</span>
<span class="t" style="top:569.38px;font-size:16px;line-height:20px;color:#000;font-weight:bold;left:447.9px;">12920.00</span>
<span class="t" style="top:601.98px;font-size:16px;line-height:20px;color:#000;font-weight:bold;left:447.9px;">12910.00</span>
<span class="t" style="top:60.68px;font-size:16px;line-height:20px;color:#000;font-weight:bold;letter-spacing:-0.025px;left:10px;">AFT 001- Algo Signals Combo AFT 000A SFG-Generic</span>
<span class="t" style="top:643.68px;font-size:16px;line-height:20px;color:#000;font-weight:bold;left:10px;">AFT 000- Algo Signals Traffic Lights</span>
<span class="t" style="top:784.13px;font-size:11px;line-height:15px;color:#000;letter-spacing:0.048px;left:4px;">© 2021 NinjaTrader, LLC</span>
<span class="t" style="top:802.98px;font-size:16px;line-height:20px;color:#000;font-weight:bold;left:-10.5px;">07:15</span>
<svg style="left:440px;top:102px" width="84" height="22" viewBox="0 0 84 22"><path d="M0.5 11L10 1.5H82.5V20.5H10z" fill="#ff0000" stroke="#a00000" stroke-width="1"/></svg>
<span class="t" style="top:103.18px;font-size:16px;line-height:20px;color:#fff;font-weight:bold;left:453.2px;">13062.58</span>
<svg style="left:440px;top:294px" width="84" height="22" viewBox="0 0 84 22"><path d="M0.5 11L10 1.5H82.5V20.5H10z" fill="#0000ff" stroke="#000060" stroke-width="1"/></svg>
<span class="t" style="top:295.18px;font-size:16px;line-height:20px;color:#fff;font-weight:bold;left:453.2px;">13003.88</span>
<svg style="left:440px;top:394px" width="84" height="21" viewBox="0 0 84 21"><path d="M0.5 10.5L10 1H82.5V20H10z" fill="#0000ff" stroke="#000060" stroke-width="1"/></svg>
<span class="t" style="top:394.68px;font-size:16px;line-height:20px;color:#fff;font-weight:bold;left:453.2px;">12973.76</span>
<svg style="left:440px;top:418px" width="84" height="21" viewBox="0 0 84 21"><path d="M0.5 10.5L10 1H82.5V20H10z" fill="#000"/></svg>
<span class="t" style="top:418.68px;font-size:16px;line-height:20px;color:#fff;font-weight:bold;left:453.2px;">12966.25</span>
<div style="left:1px;top:834px;width:534px;height:23px;background:#f0f0f0;"></div>
<svg style="left:5px;top:839px" width="9" height="10" viewBox="0 0 9 10"><path d="M7 1L2.5 5L7 9" stroke="#606060" stroke-width="2" fill="none"/></svg>
<svg style="left:521px;top:839px" width="9" height="10" viewBox="0 0 9 10"><path d="M2 1L6.5 5L2 9" stroke="#606060" stroke-width="2" fill="none"/></svg>
<div style="left:91px;top:347px;width:416px;height:500px;background:#fff;border:1px solid #a0a0a0;"></div>
<div style="left:92px;top:348px;width:14px;height:498px;background:#c9c9c9;"></div>
<div style="left:92px;top:349px;width:397px;height:16px;background:#c9c9c9;border-bottom:1px solid #d6d6d6;"></div>
<svg style="left:94px;top:352px" width="9" height="9" viewBox="0 0 9 9"><rect x=".5" y=".5" width="8" height="8" fill="#fff" stroke="#000"/><path d="M2 4.5h5" stroke="#000"/></svg>
<span class="t" style="top:348.23px;font-size:11px;line-height:15px;color:#000;font-weight:bold;letter-spacing:0.144px;left:118px;">Settings Templates</span>
<div style="left:106px;top:365px;width:217px;height:16px;background:#fff;border-bottom:1px solid #c9c9c9;"></div>
<div style="left:323px;top:365px;width:166px;height:16px;background:#fff;border-bottom:1px solid #c9c9c9;border-left:1px solid #c9c9c9;"></div>
<span class="t" style="top:365.93px;font-size:11px;line-height:15px;color:#000;letter-spacing:0.003px;left:109px;">0. AutoLoad Template Name</span>
<span class="t" style="top:365.24px;font-size:12px;line-height:16px;color:#000;font-weight:bold;letter-spacing:-0.422px;left:327.4px;">False</span>
<div style="left:106px;top:381px;width:217px;height:16px;background:#fff;border-bottom:1px solid #c9c9c9;"></div>
<div style="left:323px;top:381px;width:166px;height:16px;background:#fff;border-bottom:1px solid #c9c9c9;border-left:1px solid #c9c9c9;"></div>
<span class="t" style="top:381.93px;font-size:11px;line-height:15px;color:#000;letter-spacing:0.048px;left:109px;">1. Template Name</span>
<span class="t" style="top:381.24px;font-size:12px;line-height:16px;color:#000;font-weight:bold;letter-spacing:-0.031px;left:327.4px;">AFT 000A SFG-Generic</span>
<div style="left:106px;top:397px;width:217px;height:16px;background:#fff;border-bottom:1px solid #c9c9c9;"></div>
<div style="left:323px;top:397px;width:166px;height:16px;background:#fff;border-bottom:1px solid #c9c9c9;border-left:1px solid #c9c9c9;"></div>
<span class="t" style="top:397.93px;font-size:11px;line-height:15px;color:#000;letter-spacing:0.028px;left:109px;">2. Load From Templates</span>
<span class="t" style="top:397.24px;font-size:12px;line-height:16px;color:#000;font-weight:bold;letter-spacing:-0.152px;left:327.4px;">Select</span>
<div style="left:106px;top:413px;width:217px;height:16px;background:#fff;border-bottom:1px solid #c9c9c9;"></div>
<div style="left:323px;top:413px;width:166px;height:16px;background:#fff;border-bottom:1px solid #c9c9c9;border-left:1px solid #c9c9c9;"></div>
<span class="t" style="top:413.93px;font-size:11px;line-height:15px;color:#000;letter-spacing:0.053px;left:109px;">3. Reload Template</span>
<span class="t" style="top:413.24px;font-size:12px;line-height:16px;color:#000;font-weight:bold;letter-spacing:-0.152px;left:327.4px;">Select</span>
<div style="left:106px;top:429px;width:217px;height:16px;background:#fff;border-bottom:1px solid #c9c9c9;"></div>
<div style="left:323px;top:429px;width:166px;height:16px;background:#fff;border-bottom:1px solid #c9c9c9;border-left:1px solid #c9c9c9;"></div>
<span class="t" style="top:429.93px;font-size:11px;line-height:15px;color:#000;letter-spacing:0.047px;left:109px;">4. Save Template</span>
<span class="t" style="top:429.24px;font-size:12px;line-height:16px;color:#000;font-weight:bold;letter-spacing:-0.152px;left:327.4px;">Select</span>
<div style="left:106px;top:445px;width:217px;height:16px;background:#fff;border-bottom:1px solid #c9c9c9;"></div>
<div style="left:323px;top:445px;width:166px;height:16px;background:#fff;border-bottom:1px solid #c9c9c9;border-left:1px solid #c9c9c9;"></div>
<span class="t" style="top:445.93px;font-size:11px;line-height:15px;color:#000;letter-spacing:0.050px;left:109px;">5. Save Template As</span>
<span class="t" style="top:445.24px;font-size:12px;line-height:16px;color:#000;font-weight:bold;letter-spacing:-0.152px;left:327.4px;">Select</span>
<div style="left:92px;top:461px;width:397px;height:16px;background:#c9c9c9;border-bottom:1px solid #d6d6d6;"></div>
<svg style="left:94px;top:464px" width="9" height="9" viewBox="0 0 9 9"><rect x=".5" y=".5" width="8" height="8" fill="#fff" stroke="#000"/><path d="M2 4.5h5M4.5 2v5" stroke="#000"/></svg>
<span class="t" style="top:460.23px;font-size:11px;line-height:15px;color:#000;font-weight:bold;letter-spacing:0.328px;left:118px;">TimeZones</span>
<div style="left:92px;top:477px;width:397px;height:16px;background:#c9c9c9;border-bottom:1px solid #d6d6d6;"></div>
<svg style="left:94px;top:480px" width="9" height="9" viewBox="0 0 9 9"><rect x=".5" y=".5" width="8" height="8" fill="#fff" stroke="#000"/><path d="M2 4.5h5M4.5 2v5" stroke="#000"/></svg>
<span class="t" style="top:476.23px;font-size:11px;line-height:15px;color:#000;font-weight:bold;letter-spacing:0.000px;left:109px;">#001: Algorithmic Trading Signals Execution</span>
<div style="left:92px;top:493px;width:397px;height:16px;background:#c9c9c9;border-bottom:1px solid #d6d6d6;"></div>
<svg style="left:94px;top:496px" width="9" height="9" viewBox="0 0 9 9"><rect x=".5" y=".5" width="8" height="8" fill="#fff" stroke="#000"/><path d="M2 4.5h5" stroke="#000"/></svg>
<span class="t" style="top:492.23px;font-size:11px;line-height:15px;color:#000;font-weight:bold;letter-spacing:0.020px;left:109px;">#002: Algorithmic Trading Signals</span>
<div style="left:106px;top:509px;width:217px;height:16px;background:#fff;border-bottom:1px solid #c9c9c9;"></div>
<div style="left:323px;top:509px;width:166px;height:16px;background:#fff;border-bottom:1px solid #c9c9c9;border-left:1px solid #c9c9c9;"></div>
<span class="t" style="top:509.93px;font-size:11px;line-height:15px;color:#000;letter-spacing:0.035px;left:109px;">#000A: AFT 001 Signals- Config Wizard</span>
<span class="t" style="top:509.24px;font-size:12px;line-height:16px;color:#000;font-weight:bold;letter-spacing:-0.152px;left:327.4px;">Select</span>
<div style="left:106px;top:525px;width:217px;height:16px;background:#c9c9c9;border-bottom:1px solid #c9c9c9;"></div>
<div style="left:323px;top:525px;width:166px;height:16px;background:#fff;border-bottom:1px solid #c9c9c9;border-left:1px solid #c9c9c9;"></div>
<span class="t" style="top:525.93px;font-size:11px;line-height:15px;color:#000;letter-spacing:0.061px;left:109px;">#000B: AFT 001 Signals- Template</span>
<span class="t" style="top:525.24px;font-size:12px;line-height:16px;color:#000;font-weight:bold;letter-spacing:-0.031px;left:327.4px;">AFT 000A SFG-Generic</span>
<div style="left:106px;top:541px;width:217px;height:16px;background:#fff;border-bottom:1px solid #c9c9c9;"></div>
<div style="left:323px;top:541px;width:166px;height:16px;background:#fff;border-bottom:1px solid #c9c9c9;border-left:1px solid #c9c9c9;"></div>
<span class="t" style="top:541.93px;font-size:11px;line-height:15px;color:#000;letter-spacing:0.060px;left:109px;">#000C: AFT 001 Signals- Realtime Only</span>
<span class="t" style="top:541.24px;font-size:12px;line-height:16px;color:#000;font-weight:bold;letter-spacing:-0.422px;left:327.4px;">False</span>
<div style="left:106px;top:557px;width:217px;height:16px;background:#fff;border-bottom:1px solid #c9c9c9;"></div>
<div style="left:323px;top:557px;width:166px;height:16px;background:#fff;border-bottom:1px solid #c9c9c9;border-left:1px solid #c9c9c9;"></div>
<span class="t" style="top:557.93px;font-size:11px;line-height:15px;color:#000;letter-spacing:0.069px;left:109px;">#00A: SignalType Alpha On/Off</span>
<span class="t" style="top:557.24px;font-size:12px;line-height:16px;color:#000;font-weight:bold;letter-spacing:-0.422px;left:327.4px;">False</span>
<div style="left:106px;top:573px;width:217px;height:16px;background:#fff;border-bottom:1px solid #c9c9c9;"></div>
<div style="left:323px;top:573px;width:166px;height:16px;background:#fff;border-bottom:1px solid #c9c9c9;border-left:1px solid #c9c9c9;"></div>
<span class="t" style="top:573.93px;font-size:11px;line-height:15px;color:#000;letter-spacing:0.055px;left:109px;">#01A: SignalType 1 On/Off</span>
<span class="t" style="top:573.24px;font-size:12px;line-height:16px;color:#000;font-weight:bold;letter-spacing:-0.115px;left:327.4px;">True</span>
<div style="left:106px;top:589px;width:217px;height:16px;background:#fff;border-bottom:1px solid #c9c9c9;"></div>
<div style="left:323px;top:589px;width:166px;height:16px;background:#fff;border-bottom:1px solid #c9c9c9;border-left:1px solid #c9c9c9;"></div>
<span class="t" style="top:589.93px;font-size:11px;line-height:15px;color:#000;letter-spacing:0.107px;left:109px;">#01B: SignalType 1 Filter On/Off</span>
<span class="t" style="top:589.24px;font-size:12px;line-height:16px;color:#000;font-weight:bold;letter-spacing:-0.422px;left:327.4px;">False</span>
<div style="left:106px;top:605px;width:217px;height:16px;background:#fff;border-bottom:1px solid #c9c9c9;"></div>
<div style="left:323px;top:605px;width:166px;height:16px;background:#fff;border-bottom:1px solid #c9c9c9;border-left:1px solid #c9c9c9;"></div>
<span class="t" style="top:605.93px;font-size:11px;line-height:15px;color:#000;letter-spacing:0.055px;left:109px;">#02A: SignalType 2 On/Off</span>
<span class="t" style="top:605.24px;font-size:12px;line-height:16px;color:#000;font-weight:bold;letter-spacing:-0.115px;left:327.4px;">True</span>
<div style="left:106px;top:621px;width:217px;height:16px;background:#fff;border-bottom:1px solid #c9c9c9;"></div>
<div style="left:323px;top:621px;width:166px;height:16px;background:#fff;border-bottom:1px solid #c9c9c9;border-left:1px solid #c9c9c9;"></div>
<span class="t" style="top:621.93px;font-size:11px;line-height:15px;color:#000;letter-spacing:0.107px;left:109px;">#02B: SignalType 2 Filter On/Off</span>
<span class="t" style="top:621.24px;font-size:12px;line-height:16px;color:#000;font-weight:bold;letter-spacing:-0.115px;left:327.4px;">True</span>
<div style="left:106px;top:637px;width:217px;height:16px;background:#fff;border-bottom:1px solid #c9c9c9;"></div>
<div style="left:323px;top:637px;width:166px;height:16px;background:#fff;border-bottom:1px solid #c9c9c9;border-left:1px solid #c9c9c9;"></div>
<span class="t" style="top:637.93px;font-size:11px;line-height:15px;color:#000;letter-spacing:0.055px;left:109px;">#03A: SignalType 3 On/Off</span>
<span class="t" style="top:637.24px;font-size:12px;line-height:16px;color:#000;font-weight:bold;letter-spacing:-0.422px;left:327.4px;">False</span>
<div style="left:106px;top:653px;width:217px;height:16px;background:#fff;border-bottom:1px solid #c9c9c9;"></div>
<div style="left:323px;top:653px;width:166px;height:16px;background:#fff;border-bottom:1px solid #c9c9c9;border-left:1px solid #c9c9c9;"></div>
<span class="t" style="top:653.93px;font-size:11px;line-height:15px;color:#000;letter-spacing:0.107px;left:109px;">#03B: SignalType 3 Filter On/Off</span>
<span class="t" style="top:653.24px;font-size:12px;line-height:16px;color:#000;font-weight:bold;letter-spacing:-0.115px;left:327.4px;">True</span>
<div style="left:106px;top:669px;width:217px;height:16px;background:#fff;border-bottom:1px solid #c9c9c9;"></div>
<div style="left:323px;top:669px;width:166px;height:16px;background:#fff;border-bottom:1px solid #c9c9c9;border-left:1px solid #c9c9c9;"></div>
<span class="t" style="top:669.93px;font-size:11px;line-height:15px;color:#000;letter-spacing:0.055px;left:109px;">#04A: SignalType 4 On/Off</span>
<span class="t" style="top:669.24px;font-size:12px;line-height:16px;color:#000;font-weight:bold;letter-spacing:-0.115px;left:327.4px;">True</span>
<div style="left:106px;top:685px;width:217px;height:16px;background:#fff;border-bottom:1px solid #c9c9c9;"></div>
<div style="left:323px;top:685px;width:166px;height:16px;background:#fff;border-bottom:1px solid #c9c9c9;border-left:1px solid #c9c9c9;"></div>
<span class="t" style="top:685.93px;font-size:11px;line-height:15px;color:#000;letter-spacing:0.107px;left:109px;">#04B: SignalType 4 Filter On/Off</span>
<span class="t" style="top:685.24px;font-size:12px;line-height:16px;color:#000;font-weight:bold;letter-spacing:-0.422px;left:327.4px;">False</span>
<div style="left:106px;top:701px;width:217px;height:16px;background:#fff;border-bottom:1px solid #c9c9c9;"></div>
<div style="left:323px;top:701px;width:166px;height:16px;background:#fff;border-bottom:1px solid #c9c9c9;border-left:1px solid #c9c9c9;"></div>
<span class="t" style="top:701.93px;font-size:11px;line-height:15px;color:#000;letter-spacing:0.055px;left:109px;">#05A: SignalType 5 On/Off</span>
<span class="t" style="top:701.24px;font-size:12px;line-height:16px;color:#000;font-weight:bold;letter-spacing:-0.115px;left:327.4px;">True</span>
<div style="left:106px;top:717px;width:217px;height:16px;background:#fff;border-bottom:1px solid #c9c9c9;"></div>
<div style="left:323px;top:717px;width:166px;height:16px;background:#fff;border-bottom:1px solid #c9c9c9;border-left:1px solid #c9c9c9;"></div>
<span class="t" style="top:717.93px;font-size:11px;line-height:15px;color:#000;letter-spacing:0.107px;left:109px;">#05B: SignalType 5 Filter On/Off</span>
<span class="t" style="top:717.24px;font-size:12px;line-height:16px;color:#000;font-weight:bold;letter-spacing:-0.115px;left:327.4px;">True</span>
<div style="left:92px;top:733px;width:397px;height:16px;background:#c9c9c9;border-bottom:1px solid #d6d6d6;"></div>
<svg style="left:94px;top:736px" width="9" height="9" viewBox="0 0 9 9"><rect x=".5" y=".5" width="8" height="8" fill="#fff" stroke="#000"/><path d="M2 4.5h5M4.5 2v5" stroke="#000"/></svg>
<span class="t" style="top:732.23px;font-size:11px;line-height:15px;color:#000;font-weight:bold;letter-spacing:0.022px;left:109px;">#003: Algorithmic Trading Basic Setup</span>
<div style="left:92px;top:749px;width:397px;height:16px;background:#c9c9c9;border-bottom:1px solid #d6d6d6;"></div>
<svg style="left:94px;top:752px" width="9" height="9" viewBox="0 0 9 9"><rect x=".5" y=".5" width="8" height="8" fill="#fff" stroke="#000"/><path d="M2 4.5h5M4.5 2v5" stroke="#000"/></svg>
<span class="t" style="top:748.23px;font-size:11px;line-height:15px;color:#000;font-weight:bold;letter-spacing:-0.014px;left:109px;">#004: Algorithmic Trading Position Sizing</span>
<div style="left:92px;top:765px;width:397px;height:16px;background:#c9c9c9;border-bottom:1px solid #d6d6d6;"></div>
<svg style="left:94px;top:768px" width="9" height="9" viewBox="0 0 9 9"><rect x=".5" y=".5" width="8" height="8" fill="#fff" stroke="#000"/><path d="M2 4.5h5M4.5 2v5" stroke="#000"/></svg>
<span class="t" style="top:764.23px;font-size:11px;line-height:15px;color:#000;font-weight:bold;letter-spacing:0.170px;left:109px;">#010: Automated Trade Man.</span>
<div style="left:92px;top:781px;width:397px;height:16px;background:#c9c9c9;border-bottom:1px solid #d6d6d6;"></div>
<svg style="left:94px;top:784px" width="9" height="9" viewBox="0 0 9 9"><rect x=".5" y=".5" width="8" height="8" fill="#fff" stroke="#000"/><path d="M2 4.5h5M4.5 2v5" stroke="#000"/></svg>
<span class="t" style="top:780.23px;font-size:11px;line-height:15px;color:#000;font-weight:bold;letter-spacing:0.148px;left:109px;">#010: Automated Trade Management</span>
<div style="left:92px;top:797px;width:397px;height:16px;background:#c9c9c9;border-bottom:1px solid #d6d6d6;"></div>
<svg style="left:94px;top:800px" width="9" height="9" viewBox="0 0 9 9"><rect x=".5" y=".5" width="8" height="8" fill="#fff" stroke="#000"/><path d="M2 4.5h5M4.5 2v5" stroke="#000"/></svg>
<span class="t" style="top:796.23px;font-size:11px;line-height:15px;color:#000;font-weight:bold;letter-spacing:0.053px;left:109px;">#100: Algo Trade Filter - Traffic Lights</span>
<div style="left:92px;top:813px;width:397px;height:16px;background:#c9c9c9;border-bottom:1px solid #d6d6d6;"></div>
<svg style="left:94px;top:816px" width="9" height="9" viewBox="0 0 9 9"><rect x=".5" y=".5" width="8" height="8" fill="#fff" stroke="#000"/><path d="M2 4.5h5M4.5 2v5" stroke="#000"/></svg>
<span class="t" style="top:812.23px;font-size:11px;line-height:15px;color:#000;font-weight:bold;letter-spacing:0.154px;left:109px;">#101: Algo Trade Filter - TradeZones</span>
<div style="left:92px;top:829px;width:397px;height:16px;background:#c9c9c9;border-bottom:1px solid #d6d6d6;"></div>
<svg style="left:94px;top:832px" width="9" height="9" viewBox="0 0 9 9"><rect x=".5" y=".5" width="8" height="8" fill="#fff" stroke="#000"/><path d="M2 4.5h5M4.5 2v5" stroke="#000"/></svg>
<span class="t" style="top:828.23px;font-size:11px;line-height:15px;color:#000;font-weight:bold;letter-spacing:0.101px;left:109px;">#102: Algo Trade Filter - Sessions</span>
<div style="left:489px;top:348px;width:17px;height:498px;background:#f0f0f0;border-left:1px solid #fff;"></div>
<div style="left:490px;top:365px;width:15px;height:59px;background:#cdcdcd;"></div>
<svg style="left:493px;top:352px" width="10" height="8" viewBox="0 0 10 8"><path d="M1 6.5L5 2.5L9 6.5" stroke="#606060" stroke-width="1.8" fill="none"/></svg>
<svg style="left:493px;top:834px" width="10" height="8" viewBox="0 0 10 8"><path d="M1 1.5L5 5.5L9 1.5" stroke="#606060" stroke-width="1.8" fill="none"/></svg>
<div style="left:535px;top:56px;width:400px;height:73px;background:#000;"></div>
<span class="t" style="top:56.65px;font-size:13px;line-height:17px;color:#fff;letter-spacing:0.132px;left:734.5px;transform:translateX(-50%);margin-left:0.07px;">AFT:Sim101</span>
<span class="t" style="top:72.95px;font-size:13px;line-height:17px;color:#fff;letter-spacing:-0.400px;left:734.5px;transform:translateX(-50%);margin-left:-0.20px;">MNQ 06-21</span>
<span class="t" style="top:88.65px;font-size:13px;line-height:17px;color:#fff;letter-spacing:0.109px;left:735.5px;transform:translateX(-50%);margin-left:0.05px;">Flat</span>
<div style="left:535px;top:129px;width:400px;height:51px;background:#b9d1ea;"></div>
<span class="t" style="top:129.65px;font-size:13px;line-height:17px;color:#1e8c1e;letter-spacing:-0.350px;left:735px;transform:translateX(-50%);margin-left:-0.18px;">A: 12975.25 - 0</span>
<span class="t" style="top:147.18px;font-size:16px;line-height:20px;color:#000;letter-spacing:-0.189px;left:735px;transform:translateX(-50%);margin-left:-0.09px;">L: 12974.75 - 0</span>
<span class="t" style="top:163.65px;font-size:13px;line-height:17px;color:#e8102a;letter-spacing:-0.422px;left:735px;transform:translateX(-50%);margin-left:-0.21px;">B: 12974.25 - 0</span>
<div style="left:535px;top:180px;width:400px;height:111px;background:#f0f0f0;"></div>
<div style="left:538px;top:186px;width:397px;height:83px;border:1px solid #dcdcdc;border-right:none;"></div>
<div style="left:543px;top:182px;width:117px;height:10px;background:#f0f0f0;"></div>
<span class="t" style="top:179.63px;font-size:11px;line-height:15px;color:#000;letter-spacing:-0.320px;left:544.6px;">Realtime Settings Config</span>
<span class="t" style="top:195.63px;font-size:11px;line-height:15px;color:#000;letter-spacing:0.001px;left:545.3px;">AFT000 Template:</span>
<div style="left:642px;top:193px;width:187px;height:20px;background:#f0f0f0;border:1px solid #7a7a7a;box-shadow:inset 1px 1px 0 #fff,inset -1px -1px 0 #fff;"></div>
<span class="t" style="top:195.63px;font-size:11px;line-height:15px;color:#000;letter-spacing:-0.330px;left:645.5px;">AFT 000A SFG-Generic</span>
<div style="left:852px;top:195px;width:13px;height:13px;background:#fff;border:1px solid #333;"></div>
<span class="t" style="top:193.63px;font-size:11px;line-height:15px;color:#000;letter-spacing:-0.245px;left:869.6px;">Auto Load</span>
<div style="left:544px;top:215px;width:88px;height:24px;background:#e1e1e1;border:1px solid #adadad;"></div>
<span class="t" style="top:219.63px;font-size:11px;line-height:15px;color:#000;letter-spacing:-0.428px;left:588.0px;transform:translateX(-50%);margin-left:-0.21px;">Load</span>
<div style="left:642px;top:215px;width:88px;height:24px;background:#e1e1e1;border:1px solid #adadad;"></div>
<span class="t" style="top:219.63px;font-size:11px;line-height:15px;color:#000;letter-spacing:-0.112px;left:686.0px;transform:translateX(-50%);margin-left:-0.06px;">Reload</span>
<div style="left:740px;top:215px;width:88px;height:24px;background:#e1e1e1;border:1px solid #adadad;"></div>
<span class="t" style="top:219.63px;font-size:11px;line-height:15px;color:#000;letter-spacing:0.074px;left:784.0px;transform:translateX(-50%);margin-left:0.04px;">Save</span>
<div style="left:838px;top:215px;width:88px;height:24px;background:#e1e1e1;border:1px solid #adadad;"></div>
<span class="t" style="top:219.63px;font-size:11px;line-height:15px;color:#000;letter-spacing:0.007px;left:882.0px;transform:translateX(-50%);margin-left:0.00px;">Save As</span>
<div style="left:544px;top:244px;width:88px;height:24px;background:#e1e1e1;border:1px solid #adadad;"></div>
<span class="t" style="top:248.63px;font-size:11px;line-height:15px;color:#000;letter-spacing:0.070px;left:588.0px;transform:translateX(-50%);margin-left:0.03px;">Collapse</span>
<div style="left:642px;top:244px;width:88px;height:24px;background:#e1e1e1;border:1px solid #adadad;"></div>
<span class="t" style="top:248.63px;font-size:11px;line-height:15px;color:#000;letter-spacing:-0.045px;left:686.0px;transform:translateX(-50%);margin-left:-0.02px;">Restart</span>
<div style="left:740px;top:244px;width:88px;height:24px;background:#e1e1e1;border:1px solid #adadad;"></div>
<span class="t" style="top:248.63px;font-size:11px;line-height:15px;color:#000;letter-spacing:0.070px;left:784.0px;transform:translateX(-50%);margin-left:0.04px;">Cancel</span>
<div style="left:838px;top:244px;width:88px;height:24px;background:#e1e1e1;border:1px solid #adadad;"></div>
<span class="t" style="top:248.63px;font-size:11px;line-height:15px;color:#000;letter-spacing:0.537px;left:882.0px;transform:translateX(-50%);margin-left:0.27px;">Ok</span>
<div style="left:535px;top:290px;width:398px;height:566px;background:#fff;border:1px solid #dcdcdc;"></div>
<div style="left:933px;top:180px;width:2px;height:677px;background:#f0f0f0;"></div>
<div style="left:535px;top:270px;width:71px;height:22px;background:#fff;border:1px solid #dcdcdc;border-bottom:none;"></div>
<span class="t" style="top:273.03px;font-size:11px;line-height:15px;color:#000;letter-spacing:-0.366px;left:543.9px;">Trade Entry</span>
<div style="left:605px;top:273px;width:69px;height:18px;background:#f0f0f0;border:1px solid #dcdcdc;border-left:none;"></div>
<span class="t" style="top:274.63px;font-size:11px;line-height:15px;color:#000;letter-spacing:-0.361px;left:610.3px;">Trade Filters</span>
<div style="left:673px;top:273px;width:61px;height:18px;background:#f0f0f0;border:1px solid #dcdcdc;"></div>
<span class="t" style="top:274.63px;font-size:11px;line-height:15px;color:#000;letter-spacing:-0.315px;left:679.9px;">Stop Loss</span>
<div style="left:733px;top:273px;width:46px;height:18px;background:#f0f0f0;border:1px solid #dcdcdc;"></div>
<span class="t" style="top:274.63px;font-size:11px;line-height:15px;color:#000;letter-spacing:-0.096px;left:739px;">Adv. All</span>
<div style="left:909px;top:296px;width:18px;height:23px;background:#e1e1e1;border:1px solid #adadad;"></div>
<span class="t" style="top:300.13px;font-size:11px;line-height:15px;color:#000;left:918.0px;transform:translateX(-50%);">A</span>
<span class="t" style="top:320.84px;font-size:12px;line-height:16px;color:#000;font-weight:bold;letter-spacing:0.002px;left:547.5px;">#001: Algorithmic Trading Signals Execution</span>
<div style="left:563px;top:341px;width:344px;height:23px;background:#e1e1e1;border:1px solid #adadad;"></div>
<span class="t" style="top:345.13px;font-size:11px;line-height:15px;color:#000;letter-spacing:0.068px;left:735.0px;transform:translateX(-50%);margin-left:0.03px;">Automatic Trade Entry Off</span>
<div style="left:563px;top:366px;width:344px;height:18px;background:#e0ffff;border:1px solid #0a5fb4;box-shadow:inset 0 0 0 2px #d6e6f5;"></div>
<span class="t" style="top:367.63px;font-size:11px;line-height:15px;color:#000;letter-spacing:0.002px;left:735.0px;transform:translateX(-50%);margin-left:0.00px;">Fully Automated</span>
<div style="left:563px;top:386px;width:171px;height:18px;background:#90ee90;border:1px solid #0a5fb4;box-shadow:inset 0 0 0 2px #d6e6f5;"></div>
<span class="t" style="top:387.63px;font-size:11px;line-height:15px;color:#000;letter-spacing:0.030px;left:648.5px;transform:translateX(-50%);margin-left:0.01px;">Trade Long Off On</span>
<div style="left:736px;top:386px;width:171px;height:18px;background:#ffa07a;border:1px solid #0a5fb4;box-shadow:inset 0 0 0 2px #d6e6f5;"></div>
<span class="t" style="top:387.63px;font-size:11px;line-height:15px;color:#000;letter-spacing:0.010px;left:821.5px;transform:translateX(-50%);margin-left:0.00px;">Trade Short Off On</span>
<div style="left:563px;top:406px;width:171px;height:23px;background:#90ee90;border:1px solid #0a5fb4;box-shadow:inset 0 0 0 2px #d6e6f5;"></div>
<span class="t" style="top:410.13px;font-size:11px;line-height:15px;color:#000;letter-spacing:0.004px;left:648.5px;transform:translateX(-50%);margin-left:0.00px;">Trade Next Signal Long On</span>
<div style="left:736px;top:406px;width:171px;height:23px;background:#ffa07a;border:1px solid #0a5fb4;box-shadow:inset 0 0 0 2px #d6e6f5;"></div>
<span class="t" style="top:410.13px;font-size:11px;line-height:15px;color:#000;letter-spacing:0.015px;left:821.5px;transform:translateX(-50%);margin-left:0.01px;">Trade Next Signal Short On</span>
<span class="t" style="top:450.84px;font-size:12px;line-height:16px;color:#000;font-weight:bold;letter-spacing:0.005px;left:547.5px;">#002: Algorithmic Trading Signals</span>
<span class="t" style="top:472.63px;font-size:11px;line-height:15px;color:#000;letter-spacing:0.083px;left:573px;">AFT001 Algo Signals Template:</span>
<div style="left:735px;top:470px;width:173px;height:20px;background:#fff;border:1px solid #7a7a7a;"></div>
<span class="t" style="top:472.63px;font-size:11px;line-height:15px;color:#000;letter-spacing:-0.257px;left:737.7px;">AFT 000A SFG-Generic</span>
<div style="left:909px;top:471px;width:18px;height:18px;background:#e1e1e1;border:1px solid #adadad;"></div>
<span class="t" style="top:472.63px;font-size:11px;line-height:15px;color:#000;left:918.0px;transform:translateX(-50%);">&gt;</span>
<div style="left:563px;top:511px;width:344px;height:22px;background:#e1e1e1;border:1px solid #adadad;"></div>
<span class="t" style="top:514.63px;font-size:11px;line-height:15px;color:#000;letter-spacing:0.095px;left:735.0px;transform:translateX(-50%);margin-left:0.05px;">Signal Type Alpha Off</span>
<div style="left:909px;top:511px;width:18px;height:22px;background:#e1e1e1;border:1px solid #adadad;"></div>
<span class="t" style="top:510.60px;font-size:9px;line-height:13px;color:#000;left:918px;transform:translateX(-50%);">&gt;</span>
<span class="t" style="top:520.60px;font-size:9px;line-height:13px;color:#000;left:918px;transform:translateX(-50%);">&gt;</span>
<div style="left:563px;top:536px;width:171px;height:22px;background:#ffffb4;border:1px solid #0a5fb4;box-shadow:inset 0 0 0 2px #d6e6f5;"></div>
<span class="t" style="top:539.63px;font-size:11px;line-height:15px;color:#000;letter-spacing:0.102px;left:648.5px;transform:translateX(-50%);margin-left:0.05px;">Signal Type 1 (ST1) On</span>
<div style="left:736px;top:536px;width:171px;height:22px;background:#e1e1e1;border:1px solid #adadad;"></div>
<span class="t" style="top:539.63px;font-size:11px;line-height:15px;color:#000;letter-spacing:0.140px;left:821.5px;transform:translateX(-50%);margin-left:0.07px;">ST1 Traffic Light Filter Off</span>
<div style="left:563px;top:561px;width:171px;height:22px;background:#ffffb4;border:1px solid #0a5fb4;box-shadow:inset 0 0 0 2px #d6e6f5;"></div>
<span class="t" style="top:564.63px;font-size:11px;line-height:15px;color:#000;letter-spacing:0.102px;left:648.5px;transform:translateX(-50%);margin-left:0.05px;">Signal Type 2 (ST2) On</span>
<div style="left:736px;top:561px;width:171px;height:22px;background:#ffffb4;border:1px solid #0a5fb4;box-shadow:inset 0 0 0 2px #d6e6f5;"></div>
<span class="t" style="top:564.63px;font-size:11px;line-height:15px;color:#000;letter-spacing:0.137px;left:821.5px;transform:translateX(-50%);margin-left:0.07px;">ST2 Traffic Light Filter On</span>
<div style="left:563px;top:586px;width:171px;height:22px;background:#e1e1e1;border:1px solid #adadad;"></div>
<span class="t" style="top:589.63px;font-size:11px;line-height:15px;color:#000;letter-spacing:0.130px;left:648.5px;transform:translateX(-50%);margin-left:0.06px;">Signal Type 3 (ST3) Off</span>
<div style="left:736px;top:586px;width:171px;height:22px;background:#ffffb4;border:1px solid #0a5fb4;box-shadow:inset 0 0 0 2px #d6e6f5;"></div>
<span class="t" style="top:589.63px;font-size:11px;line-height:15px;color:#000;letter-spacing:0.137px;left:821.5px;transform:translateX(-50%);margin-left:0.07px;">ST3 Traffic Light Filter On</span>
<div style="left:563px;top:611px;width:171px;height:22px;background:#ffffb4;border:1px solid #0a5fb4;box-shadow:inset 0 0 0 2px #d6e6f5;"></div>
<span class="t" style="top:614.63px;font-size:11px;line-height:15px;color:#000;letter-spacing:0.102px;left:648.5px;transform:translateX(-50%);margin-left:0.05px;">Signal Type 4 (ST4) On</span>
<div style="left:736px;top:611px;width:171px;height:22px;background:#e1e1e1;border:1px solid #adadad;"></div>
<span class="t" style="top:614.63px;font-size:11px;line-height:15px;color:#000;letter-spacing:0.140px;left:821.5px;transform:translateX(-50%);margin-left:0.07px;">ST4 Traffic Light Filter Off</span>
<div style="left:563px;top:636px;width:171px;height:22px;background:#ffffb4;border:1px solid #0a5fb4;box-shadow:inset 0 0 0 2px #d6e6f5;"></div>
<span class="t" style="top:639.63px;font-size:11px;line-height:15px;color:#000;letter-spacing:0.102px;left:648.5px;transform:translateX(-50%);margin-left:0.05px;">Signal Type 5 (ST5) On</span>
<div style="left:736px;top:636px;width:171px;height:22px;background:#ffffb4;border:1px solid #0a5fb4;box-shadow:inset 0 0 0 2px #d6e6f5;"></div>
<span class="t" style="top:639.63px;font-size:11px;line-height:15px;color:#000;letter-spacing:0.137px;left:821.5px;transform:translateX(-50%);margin-left:0.07px;">ST5 Traffic Light Filter On</span>
<span class="t" style="top:681.54px;font-size:12px;line-height:16px;color:#000;font-weight:bold;letter-spacing:0.001px;left:547.3px;">#003: Algorithmic Trading Basic Setup</span>
<span class="t" style="top:702.63px;font-size:11px;line-height:15px;color:#000;letter-spacing:0.056px;left:609.3px;">Trading System Account:</span>
<div style="left:735px;top:700px;width:173px;height:20px;background:#f0f0f0;border:1px solid #7a7a7a;box-shadow:inset 1px 1px 0 #fff,inset -1px -1px 0 #fff;"></div>
<span class="t" style="top:702.63px;font-size:11px;line-height:15px;color:#000;letter-spacing:-0.779px;left:738.8px;">Sim101</span>
<div style="left:909px;top:701px;width:18px;height:18px;background:#e1e1e1;border:1px solid #adadad;"></div>
<span class="t" style="top:702.63px;font-size:11px;line-height:15px;color:#000;left:918.0px;transform:translateX(-50%);">&gt;</span>
<span class="t" style="top:739.34px;font-size:12px;line-height:16px;color:#000;font-weight:bold;letter-spacing:-0.496px;left:547.3px;">#004: Algorithmic Trading Position Sizing</span>
<span class="t" style="top:762.93px;font-size:11px;line-height:15px;color:#000;letter-spacing:0.096px;left:627.3px;">Trade Bracket 1 Qty:</span>
<div style="left:738px;top:763px;width:167px;height:20px;background:#fff;border:1px solid #a0a0a8;"></div>
<div style="left:740px;top:764px;width:14px;height:17px;background:#f0f0f0;border:1px solid #c2c2c2;"></div>
<div style="left:741px;top:772px;width:12px;height:1px;background:#c8c8c8;"></div>
<svg style="left:744px;top:767px" width="6" height="11" viewBox="0 0 6 11"><path d="M0 3.2L3 0L6 3.2z M0 8L3 11L6 8z" fill="#000"/></svg>
<span class="t" style="top:763.74px;font-size:12px;line-height:16px;color:#000;left:755.4px;">2</span>
<span class="t" style="top:782.63px;font-size:11px;line-height:15px;color:#000;letter-spacing:0.096px;left:627.3px;">Trade Bracket 2 Qty:</span>
<div style="left:738px;top:783px;width:167px;height:20px;background:#fff;border:1px solid #a0a0a8;"></div>
<div style="left:740px;top:784px;width:14px;height:17px;background:#f0f0f0;border:1px solid #c2c2c2;"></div>
<div style="left:741px;top:792px;width:12px;height:1px;background:#c8c8c8;"></div>
<svg style="left:744px;top:787px" width="6" height="11" viewBox="0 0 6 11"><path d="M0 3.2L3 0L6 3.2z M0 8L3 11L6 8z" fill="#000"/></svg>
<span class="t" style="top:783.74px;font-size:12px;line-height:16px;color:#000;left:755.4px;">1</span>
<span class="t" style="top:802.63px;font-size:11px;line-height:15px;color:#000;letter-spacing:0.096px;left:627.3px;">Trade Bracket 3 Qty:</span>
<div style="left:738px;top:803px;width:167px;height:20px;background:#fff;border:1px solid #a0a0a8;"></div>
<div style="left:740px;top:804px;width:14px;height:17px;background:#f0f0f0;border:1px solid #c2c2c2;"></div>
<div style="left:741px;top:812px;width:12px;height:1px;background:#c8c8c8;"></div>
<svg style="left:744px;top:807px" width="6" height="11" viewBox="0 0 6 11"><path d="M0 3.2L3 0L6 3.2z M0 8L3 11L6 8z" fill="#000"/></svg>
<span class="t" style="top:803.74px;font-size:12px;line-height:16px;color:#000;left:755.4px;">0</span>
<span class="t" style="top:822.33px;font-size:11px;line-height:15px;color:#000;letter-spacing:0.096px;left:627.3px;">Trade Bracket 4 Qty:</span>
<div style="left:738px;top:822px;width:167px;height:20px;background:#fff;border:1px solid #a0a0a8;"></div>
<div style="left:740px;top:823px;width:14px;height:17px;background:#f0f0f0;border:1px solid #c2c2c2;"></div>
<div style="left:741px;top:831px;width:12px;height:1px;background:#c8c8c8;"></div>
<svg style="left:744px;top:826px" width="6" height="11" viewBox="0 0 6 11"><path d="M0 3.2L3 0L6 3.2z M0 8L3 11L6 8z" fill="#000"/></svg>
<span class="t" style="top:822.74px;font-size:12px;line-height:16px;color:#000;left:755.4px;">0</span>
<svg style="left:0;top:0" width="936" height="858" viewBox="0 0 936 858">
<defs><filter id="sh" x="-5%" y="-5%" width="110%" height="110%"><feGaussianBlur stdDeviation="2"/></filter>
<filter id="sh2" x="-10%" y="-20%" width="120%" height="140%"><feGaussianBlur stdDeviation="2.2"/></filter></defs>
<g transform="translate(2,3)" fill="#000" stroke="#000" opacity=".35" filter="url(#sh)"><path d="M370.0 247.0L527.1 72.3" stroke-width="11" stroke-linecap="round" fill="none"/><path d="M544.5 53.0L538.4 85.2L513.1 62.4z" stroke="none"/><path d="M366.0 252.5L518.3 275.6" stroke-width="11" stroke-linecap="round" fill="none"/><path d="M544.0 279.5L514.1 290.1L518.6 260.5z" stroke="none"/><path d="M466.0 530.0L543.9 490.3" stroke-width="10" stroke-linecap="round" fill="none"/><path d="M568.0 478.0L549.0 504.5L535.4 477.8z" stroke="none"/></g>
<g fill="#12a98b" stroke="#12a98b"><path d="M370.0 247.0L527.1 72.3" stroke-width="11" stroke-linecap="round" fill="none"/><path d="M544.5 53.0L538.4 85.2L513.1 62.4z" stroke="none"/><path d="M366.0 252.5L518.3 275.6" stroke-width="11" stroke-linecap="round" fill="none"/><path d="M544.0 279.5L514.1 290.1L518.6 260.5z" stroke="none"/><path d="M466.0 530.0L543.9 490.3" stroke-width="10" stroke-linecap="round" fill="none"/><path d="M568.0 478.0L549.0 504.5L535.4 477.8z" stroke="none"/></g>
<g font-family="Liberation Sans, sans-serif" font-size="21.5" text-anchor="middle" stroke-linejoin="round">
<g transform="translate(1.5,2.5)" fill="#000" stroke="#000" stroke-width="10" opacity=".85" filter="url(#sh2)">
<text x="250" y="247.3" textLength="80" lengthAdjust="spacingAndGlyphs">AFT000</text>
<text x="250" y="274.6" textLength="192" lengthAdjust="spacingAndGlyphs">NinjaBuddy Trade</text>
<text x="250.5" y="301.4" textLength="188.5" lengthAdjust="spacingAndGlyphs">Manager Settings</text></g>
<g fill="#fff" stroke="#000" stroke-width="6" paint-order="stroke">
<text x="250" y="247.3" textLength="80" lengthAdjust="spacingAndGlyphs">AFT000</text>
<text x="250" y="274.6" textLength="192" lengthAdjust="spacingAndGlyphs">NinjaBuddy Trade</text>
<text x="250.5" y="301.4" textLength="188.5" lengthAdjust="spacingAndGlyphs">Manager Settings</text></g>
</g>
<path d="M51.5 19v16l3.6-3.4 2.8 6.3 2.5-1.1-2.8-6.2 5-.2z" fill="#fff" stroke="#000" stroke-width="1"/>
</svg>
</body></html>
